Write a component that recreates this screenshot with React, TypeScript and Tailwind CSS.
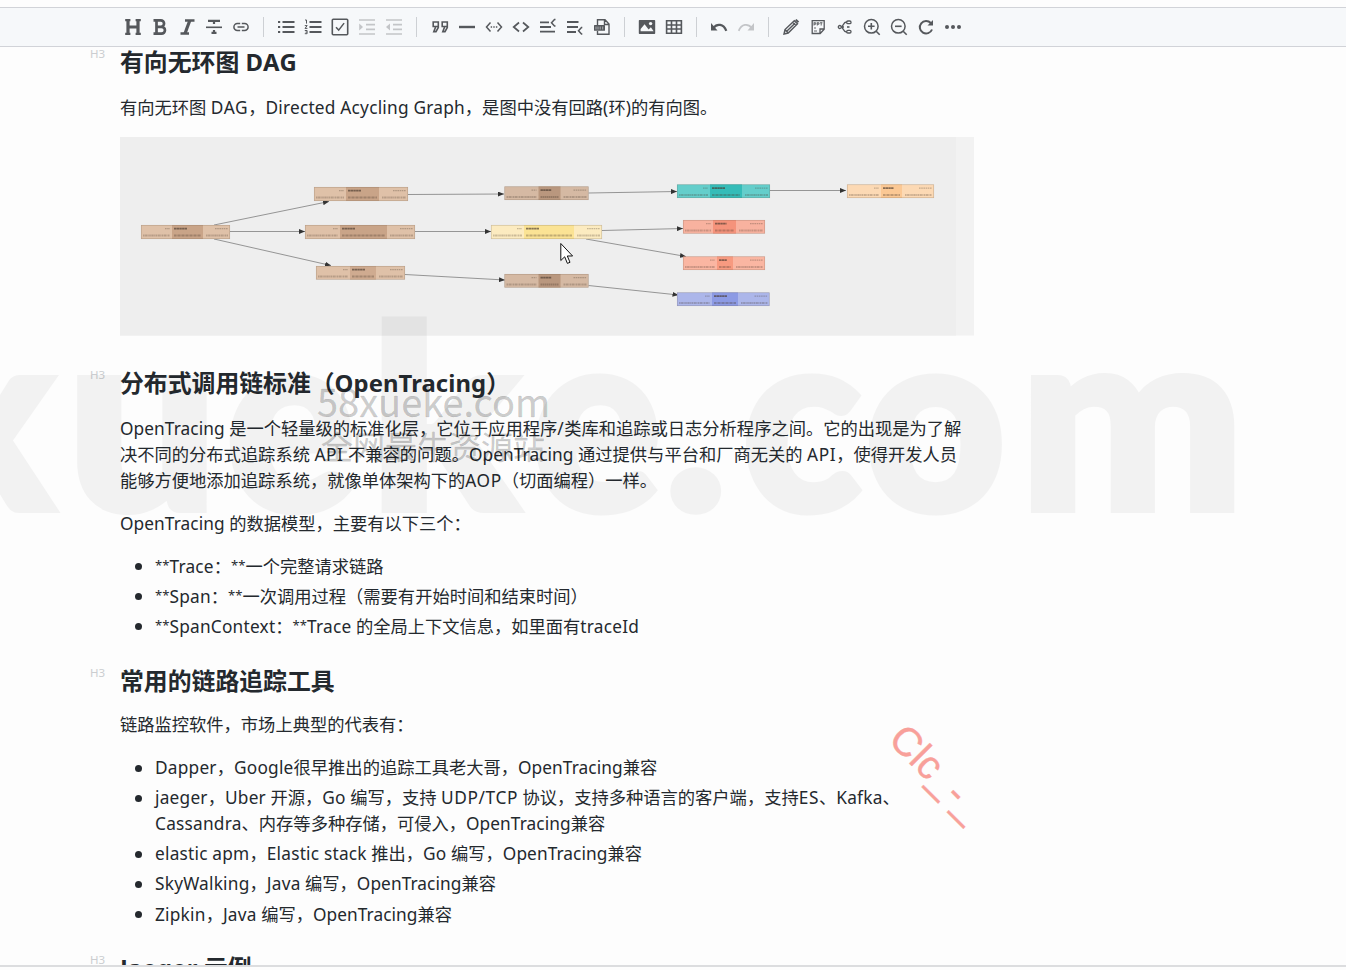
import type { ReactNode } from "react";

const S = ({ children, dim }: { children: ReactNode; dim?: boolean }) => (
  <button className="flex w-[27px] shrink-0 items-center justify-center">
    <svg
      width="18"
      height="18"
      viewBox="0 0 18 18"
      fill="none"
      stroke="currentColor"
      strokeWidth="1.5"
      className={dim ? "text-[#c3c5c8]" : "text-[#55585c]"}
    >
      {children}
    </svg>
  </button>
);

const Sep = () => (
  <div className="flex w-[18.25px] shrink-0 justify-center">
    <div className="h-5 w-px bg-[#cdd0d4]" />
  </div>
);

function Toolbar() {
  return (
    <div className="mt-[7px] flex h-10 shrink-0 items-center border-y border-[#d1d3d8] bg-[#f6f8fa] pl-[119.6px]">
      <S>
        <path d="M1.2 2.2h5.2M1.2 15.8h5.2M11.6 2.2h5.2M11.6 15.8h5.2" strokeWidth="2.2" />
        <path d="M4 2v14M14 2v14M4 9h10" strokeWidth="3.2" />
      </S>
      <S>
        <path d="M2.5 2.3h7.3a3.2 3.2 0 0 1 0 6.5H5.5h5a3.4 3.4 0 0 1 0 6.9h-8M5.5 2v14" strokeWidth="2.7" />
      </S>
      <S>
        <path d="M7 2.5h9.5M2.5 15.5h8.5" strokeWidth="2.4" />
        <path d="M11.8 2.5 7 15.5" strokeWidth="3.2" />
      </S>
      <S>
        <path d="M3 2.9h12M9 3v3M9 12v3.5M6.5 14.9h5" strokeWidth="2.2" />
        <path d="M1 9.3h16" strokeWidth="1.6" />
      </S>
      <S>
        <path d="M8.2 12.5H5.4a3.5 3.5 0 0 1 0-7h2.8M9.8 5.5h2.8a3.5 3.5 0 0 1 0 7H9.8M5.5 9h7" />
      </S>
      <Sep />
      <S>
        <path d="M5.5 4h12M5.5 9h12M5.5 14h12" strokeWidth="1.8" />
        <path d="M1 4h2.2M1 9h2.2M1 14h2.2" strokeWidth="2.2" />
      </S>
      <S>
        <path d="M5.5 4h12M5.5 9h12M5.5 14h12" strokeWidth="1.8" />
        <path d="M1 2h1.5v3.6M.8 7.6h2.4L1 10.4h2.4M.8 12.5h2.3v3.2H.8M1.5 14.1h1.5" strokeWidth="1" />
      </S>
      <S>
        <rect x="1.3" y="1.3" width="15.4" height="15.4" rx="1" strokeWidth="1.6" />
        <path d="m5 9.3 2.7 2.8 5.4-7" strokeWidth="1.5" />
      </S>
      <S dim>
        <path d="M1 2h16M8 6.7h9M8 11.3h9M1 16h16" strokeWidth="1.7" />
        <path d="M1.2 5.5v7L5 9z" fill="currentColor" stroke="none" />
      </S>
      <S dim>
        <path d="M1 2h16M8 6.7h9M8 11.3h9M1 16h16" strokeWidth="1.7" />
        <path d="M5 5.5v7L1 9z" fill="currentColor" stroke="none" />
      </S>
      <Sep />
      <S>
        <path d="M7.3 8.5H2.2V4h5.1v5.5L5 13.6H2.8L4.6 9M16.3 8.5h-5.1V4h5.1v5.5L14 13.6h-2.2L13.6 9" strokeWidth="1.6" />
      </S>
      <S>
        <path d="M1 9h16" strokeWidth="2.4" />
      </S>
      <S>
        <path d="M5.5 4.5 1.5 9l4 4.5M12.5 4.5l4 4.5-4 4.5" />
        <path d="M5.7 9h1.4M8.3 9h1.4M10.9 9h1.4" strokeWidth="1.5" />
      </S>
      <S>
        <path d="M7 4.5 1.7 9 7 13.5M11 4.5 16.3 9 11 13.5" strokeWidth="1.7" />
      </S>
      <S>
        <path d="M1 4.3h9M1 9h11M1 13.7h15" strokeWidth="1.8" />
        <path d="M16.5 1.5h-1l-3 3.2 3 3.3h1" />
      </S>
      <S>
        <path d="M1 4h11.5M1 9h11M1 14h9" strokeWidth="1.8" />
        <path d="M16.3 9.5h-.8l-3 3.2 3 3.3h.8" />
      </S>
      <S>
        <path d="M4.5 7V1.8H12L16 6v10.3H4.5V13M11.5 2v4.5H16" strokeWidth="1.4" />
        <rect x="1" y="7" width="11" height="5.8" rx=".5" fill="currentColor" stroke="none" />
        <path d="M3 8.5v3M5 8.5v3M7.2 8.5v3M9.7 8.5v3" stroke="#d0d3d6" strokeWidth=".7" />
      </S>
      <Sep />
      <S>
        <path
          fillRule="evenodd"
          d="M1.8 2h14.4c.6 0 1 .4 1 1v12c0 .6-.4 1-1 1H1.8c-.6 0-1-.4-1-1V3c0-.6.4-1 1-1zM2.6 13.2h13L12.9 9.2l-2.3 2.2L6.6 6.2 2.6 11z"
          fill="currentColor"
          stroke="none"
        />
        <circle cx="12.6" cy="5.6" r="1.7" fill="#f6f8fa" stroke="none" />
      </S>
      <S>
        <path d="M1.6 2.8h14.8v12.4H1.6zM1.6 7h14.8M1.6 11h14.8M6.5 2.8v12.4M11.5 2.8v12.4" strokeWidth="1.6" />
      </S>
      <Sep />
      <S>
        <path d="M1 5v7.5h6.5z" fill="currentColor" stroke="none" />
        <path d="M3.5 9.8C7 5.3 13.5 5.7 16.3 12.8" strokeWidth="2.2" />
      </S>
      <S dim>
        <path d="M17 5v7.5h-6.5z" fill="currentColor" stroke="none" />
        <path d="M14.5 9.8C11 5.3 4.5 5.7 1.7 12.8" strokeWidth="1.8" />
      </S>
      <Sep />
      <S>
        <path d="m2 16 1-4.5L12.3 2.7l3.2 3.1L6.2 15zM3 11.5 6.2 15M10.7 4.3l3.2 3.1M5 13l8-7.8" strokeWidth="1.4" />
        <path d="m13 2.2 1.5-1.3 2.7 2.6-1.5 1.5z" fill="currentColor" stroke="none" />
      </S>
      <S>
        <path d="M3.2 2.7h12v8.5l-4 4.3h-8zM11 15.3V11h4" strokeWidth="1.3" />
        <path d="M5 4.3v3.2M5 4.8h1.8v1.4H5M8.3 4.3v3.2M8.3 4.8H10v1.4H8.3M11 4.8h2.5M12.2 4.5v3M5 10h2M5 13h3" strokeWidth=".9" />
      </S>
      <S>
        <path d="M5 9h3M5 9c2.5 0 2-5 5.5-5H12M5 9c2.5 0 2 5 5.5 5H12" strokeWidth="1.4" />
        <circle cx="3.8" cy="9" r="1.5" fill="#f6f8fa" strokeWidth="1.3" />
        <rect x="10.7" y="3" width="4.3" height="2.6" rx="1.2" fill="#f6f8fa" strokeWidth="1.3" />
        <path d="M11 9h2.5" strokeWidth="1.6" />
        <rect x="10.7" y="12.4" width="4.3" height="2.6" rx="1.2" fill="#f6f8fa" strokeWidth="1.3" />
      </S>
      <S>
        <circle cx="8.3" cy="8.3" r="6.8" />
        <path d="M5 8.3h6.6M8.3 5v6.6" strokeWidth="1.6" />
        <path d="m13.2 13.2 3.5 3.5" strokeWidth="1.6" />
      </S>
      <S>
        <circle cx="8.3" cy="8.3" r="6.8" />
        <path d="M5 8.3h6.6" strokeWidth="1.6" />
        <path d="m13.2 13.2 3.5 3.5" strokeWidth="1.6" />
      </S>
      <S>
        <path d="M15 11.5A6.3 6.3 0 1 1 13.8 5" strokeWidth="2" />
        <path d="M16 2v5.5h-5.5z" fill="currentColor" stroke="none" />
      </S>
      <S>
        <g fill="currentColor" stroke="none">
          <circle cx="3" cy="9" r="2" />
          <circle cx="9" cy="9" r="2" />
          <circle cx="15" cy="9" r="2" />
        </g>
      </S>
    </div>
  );
}

function runClass(part: string) {
  if (part === "**") return "text-[13.1px] leading-none align-[3px]";
  if (/^[A-Z/]+$/.test(part)) return "tracking-[0.6px]";
  if (part === "OpenTracing") return "tracking-[0.08px]";
  return "tracking-[0.22px]";
}

/* Latin runs get their own tracking; the CJK text around them keeps its natural pitch. */
function Mixed({ text }: { text: string }) {
  return (
    <>
      {text.split(/(\*\*|[\x21-\x29\x2b-\x7e]+(?: +[\x21-\x29\x2b-\x7e]+)*)/).map((part, i) =>
        i % 2 ? (
          <span key={i} className={runClass(part)}>
            {part}
          </span>
        ) : (
          part
        ),
      )}
    </>
  );
}

function Heading({ text, className }: { text: string; className?: string }) {
  return (
    <h3 className={`-ml-[31px] flex h-[30px] shrink-0 items-start whitespace-nowrap ${className ?? ""}`}>
      <span className="w-[31px] pl-px text-[11.5px] leading-[13px] font-normal text-[#cbcdd0]">H3</span>
      <span className="text-[23.85px] leading-[30px] font-bold">
        <Mixed text={text} />
      </span>
    </h3>
  );
}

function Lines({ lines, className }: { lines: string[]; className?: string }) {
  return (
    <p className={`whitespace-nowrap ${className ?? ""}`}>
      {lines.map((l) => (
        <span key={l} className="block h-[26px]">
          <Mixed text={l} />
        </span>
      ))}
    </p>
  );
}

function List({ items, className }: { items: string[][]; className?: string }) {
  return (
    <ul className={`flex flex-col gap-[4.1px] ${className ?? ""}`}>
      {items.map((lines) => (
        <li key={lines[0]} className="flex">
          <span className="mt-[9.5px] mr-[13.5px] ml-[14.5px] size-[7px] shrink-0 rounded-full bg-[#24292e]" />
          <Lines lines={lines} />
        </li>
      ))}
    </ul>
  );
}

type Node = [x: number, y: number, w: number, h: number, a: number, b: number, light: string, dark: string];

const nodes: Node[] = [
  [141, 225, 89, 14, 31, 62, "#dfc1a8", "#c9a488"],
  [314, 187, 94, 14, 32, 65, "#dfc1a8", "#c9a488"],
  [305, 225, 110, 14, 35, 82, "#dfc1a8", "#c9a488"],
  [316, 266, 89, 13.5, 34, 60, "#dfc1a8", "#cfab90"],
  [504.5, 186.5, 84, 13.5, 34, 56, "#d5b9a3", "#b9977e"],
  [491, 225, 111, 14, 33, 83, "#fcebc0", "#fbe394"],
  [504.5, 274, 84, 13.5, 34, 56, "#d5b9a3", "#b9977e"],
  [677, 184.5, 93, 13.5, 33, 65, "#64cecb", "#35bcb8"],
  [683, 220, 82, 13.5, 30, 53, "#f8b29f", "#f5937b"],
  [683, 256.5, 82, 13.5, 34, 50, "#fab6a2", "#f79a80"],
  [677, 292.5, 92.5, 13.5, 35, 61, "#acb6ea", "#8c9ae4"],
  [847, 184.5, 87, 13.5, 34, 55, "#fcd9b4", "#fbc894"],
];

const edges: [number, number, number, number][] = [
  [214, 225, 329, 201.5],
  [230, 231.5, 305, 231.5],
  [214, 239, 331, 265.5],
  [408, 194.5, 504, 194],
  [415, 231.5, 491, 231.5],
  [405, 274.5, 505, 280],
  [588.5, 193, 677, 191.5],
  [770, 190.5, 846, 190.5],
  [602, 230.5, 683, 228.5],
  [586, 239, 686, 256.5],
  [588.5, 285.5, 678.5, 295],
];

function Graph() {
  return (
    <svg className="mt-4 block h-[198.5px] w-[854px] shrink-0" viewBox="120 137 854 198.5">
      <defs>
        <marker id="arrow" viewBox="0 0 6 5" refX="6" refY="2.5" markerWidth="6" markerHeight="5" markerUnits="userSpaceOnUse" orient="auto">
          <path d="M0 0 6 2.5 0 5z" fill="#333" />
        </marker>
      </defs>
      <rect x="120" y="137" width="854" height="198.5" fill="#f2f2f2" />
      <rect x="120" y="137" width="836" height="198.5" fill="#eeeeee" />
      {edges.map(([x1, y1, x2, y2]) => (
        <line key={`${x1}-${y1}-${y2}`} x1={x1} y1={y1} x2={x2} y2={y2} stroke="#8a8a8a" strokeWidth=".9" markerEnd="url(#arrow)" />
      ))}
      {nodes.map(([x, y, w, h, a, b, light, dark]) => (
        <g key={`${x}-${y}`}>
          <rect x={x} y={y} width={w} height={h} fill={light} />
          <rect x={x + a} y={y} width={b - a} height={h} fill={dark} />
          <rect x={x + 0.25} y={y + 0.25} width={w - 0.5} height={h - 0.5} fill="none" stroke="#6b5a4c" strokeOpacity=".35" strokeWidth=".6" />
          <g stroke="#4a3a30" fill="none">
            <path d={`M${x + 2} ${y + 10.5}H${x + a - 2}M${x + b + 3} ${y + 10.5}H${x + w - 2}`} strokeWidth="2" strokeOpacity=".27" strokeDasharray="1.6 .5 2.4 .4 .8 .5" />
            <path d={`M${x + a + 2} ${y + 10.5}H${x + b - 2}`} strokeWidth="2" strokeOpacity=".32" strokeDasharray="2 .4 1.2 .4" />
            <path d={`M${x + w - 15} ${y + 3.6}H${x + w - 2}M${x + a - 7} ${y + 3.6}H${x + a - 2}`} strokeWidth="1.4" strokeOpacity=".3" strokeDasharray="1.6 .6" />
            <path d={`M${x + a + 2} ${y + 3.6}h${Math.min(13, (b - a) * 0.5)}`} strokeWidth="1.6" strokeOpacity=".65" strokeDasharray="2.4 .3" />
          </g>
        </g>
      ))}
    </svg>
  );
}

/* glyph, left origin, horizontal stretch */
const watermark: [string, number, number][] = [
  ["x", -84, 1.02],
  ["u", 67, 1.05],
  ["e", 226, 0.95],
  ["k", 370, 1.07],
  ["e", 532, 0.95],
  [".", 664, 1.05],
  ["c", 742, 0.97],
  ["o", 865, 0.96],
  ["m", 1019.5, 1.05],
];

export default function App() {
  return (
    <div className="relative flex h-[970px] w-[1346px] flex-col overflow-hidden bg-[#fdfdfd] font-['Noto_Sans','Noto_Sans_CJK_SC',sans-serif] text-[#24292e]" lang="zh-CN">
      <Toolbar />
      <main className="relative z-10 flex h-[919.5px] shrink-0 flex-col overflow-hidden border-b-2 border-[#dcdddf] pl-[120px] text-[17.27px] leading-[26px]">
        <Heading text="有向无环图 DAG" />
        <Lines className="mt-[18px]" lines={["有向无环图 DAG，Directed Acycling Graph，是图中没有回路(环)的有向图。"]} />
        <Graph />
        <Heading className="mt-[32.5px]" text="分布式调用链标准（OpenTracing）" />
        <Lines
          className="mt-[17.5px]"
          lines={[
            "OpenTracing 是一个轻量级的标准化层，它位于应用程序/类库和追踪或日志分析程序之间。它的出现是为了解",
            "决不同的分布式追踪系统 API 不兼容的问题。OpenTracing 通过提供与平台和厂商无关的 API，使得开发人员",
            "能够方便地添加追踪系统，就像单体架构下的AOP（切面编程）一样。",
          ]}
        />
        <Lines className="mt-[17px]" lines={["OpenTracing 的数据模型，主要有以下三个："]} />
        <List
          className="mt-[17px]"
          items={[
            ["**Trace：**一个完整请求链路"],
            ["**Span：**一次调用过程（需要有开始时间和结束时间）"],
            ["**SpanContext：**Trace 的全局上下文信息，如里面有traceId"],
          ]}
        />
        <Heading className="mt-[26px]" text="常用的链路追踪工具" />
        <Lines className="mt-4" lines={["链路监控软件，市场上典型的代表有："]} />
        <List
          className="mt-[17.5px]"
          items={[
            ["Dapper，Google很早推出的追踪工具老大哥，OpenTracing兼容"],
            ["jaeger，Uber 开源，Go 编写，支持 UDP/TCP 协议，支持多种语言的客户端，支持ES、Kafka、", "Cassandra、内存等多种存储，可侵入，OpenTracing兼容"],
            ["elastic apm，Elastic stack 推出，Go 编写，OpenTracing兼容"],
            ["SkyWalking，Java 编写，OpenTracing兼容"],
            ["Zipkin，Java 编写，OpenTracing兼容"],
          ]}
        />
        <Heading className="mt-[25px]" text="Jaeger 示例" />
      </main>

      <svg className="pointer-events-none absolute inset-0 z-20 font-['Lato',sans-serif] text-[254px] font-black opacity-[0.04]" width="1346" height="970" viewBox="0 0 1346 970">
        {watermark.map(([c, x, sx]) => (
          <text key={x} transform={`translate(${x} 509.5) scale(${sx} 1)`} fill="#000" stroke="#000" strokeWidth="7" strokeLinejoin="miter">
            {c}
          </text>
        ))}
      </svg>
      <div className="pointer-events-none absolute top-[379px] left-[317px] z-20 font-['Noto_Sans_CJK_SC',sans-serif] whitespace-nowrap text-black/20 [-webkit-text-stroke:0.4px_rgba(0,0,0,0.12)]">
        <div className="text-[38px] leading-[44px]">58xueke.com</div>
        <div className="pl-[4px] text-[32px] leading-[44px]">全网最牛资源站</div>
      </div>
      <div className="pointer-events-none absolute top-[706.7px] left-[886.6px] z-20 origin-[0_34px] rotate-45 font-['Liberation_Sans',sans-serif] text-[40px] leading-[40px] whitespace-nowrap text-[#f8a09a] [-webkit-text-stroke:0.4px_#f8a09a]">Clc_-_</div>
      <svg className="pointer-events-none absolute top-[242px] left-[560px] z-30" width="14" height="23" viewBox="0 0 14 23">
        <path d="M.8 1.5v17l3.9-3.7 2.7 6.6 2.6-1.1-2.7-6.3h5.3z" fill="#fff" stroke="#111" strokeWidth="1" />
      </svg>
    </div>
  );
}
